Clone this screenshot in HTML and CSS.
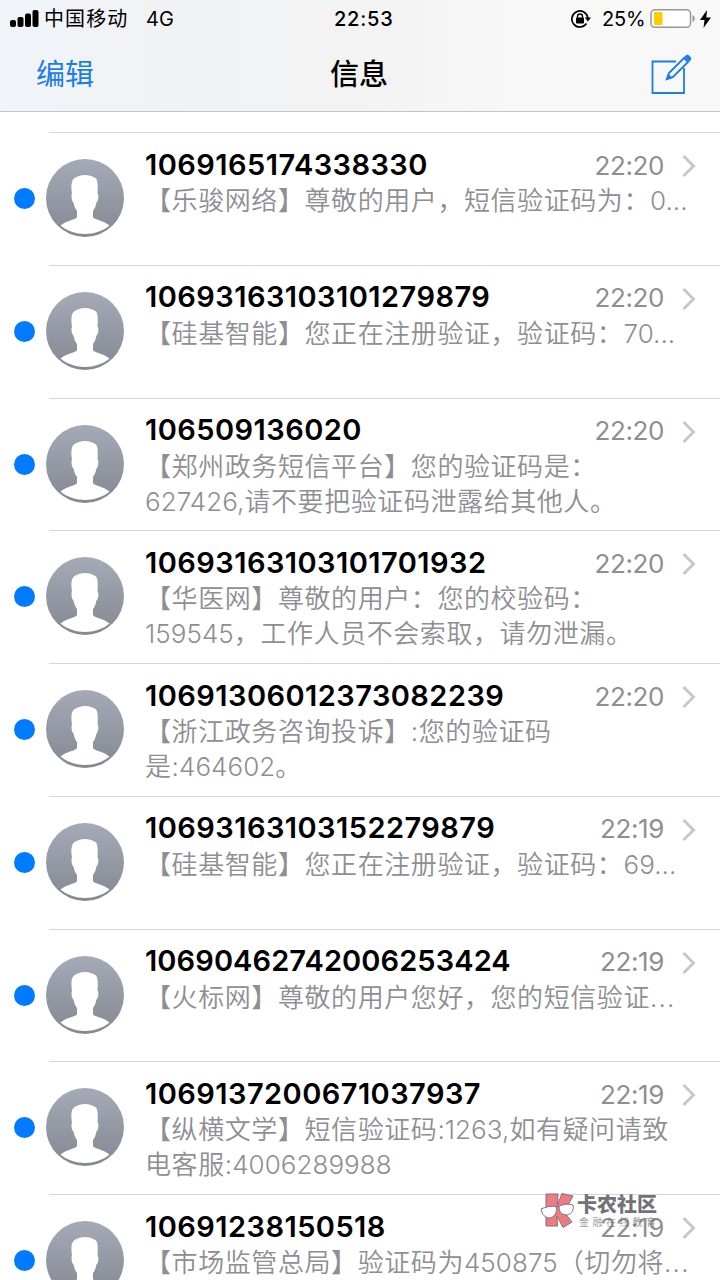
FILE: index.html
```html
<!DOCTYPE html>
<html lang="zh-CN">
<head>
    <meta charset="UTF-8">
    <meta name="viewport" content="width=device-width, initial-scale=1.0">
    <title>信息</title>
    <link rel="stylesheet" href="styles.css">
</head>
<body>
<svg class="defs" width="0" height="0">
    <defs>
        <linearGradient id="gray" x1="0" y1="0" x2="0" y2="1">
            <stop offset="0" stop-color="#a5aab7"/>
            <stop offset="1" stop-color="#858892"/>
        </linearGradient>
        <symbol id="person" viewBox="0 0 78 78">
            <circle cx="39" cy="39" r="39" fill="url(#gray)"/>
            <path fill="#fff" d="M39 16C43 16 47 17.500 50 19.500C52 22 52 28 51.500 34.500C53 36 52.500 42 50.500 43.500C50 45 49.500 49 47 52V58C48 61 57 61 63.500 66.500C57 72 48 75 39 75S21 72 14.500 66.500C21 61 30 61 31 58V52C28.500 49 28 45 27.500 43.500C25.500 42 25 36 26 34.500C25 28 25 22 28 19.500C31 17.500 35 16 39 16Z"/>
        </symbol>
        <symbol id="arrow" viewBox="0 0 14 24">
            <path d="M1.500 2L11.500 12L1.500 22" fill="none" stroke="#c7c7cc" stroke-width="3"/>
        </symbol>
    </defs>
</svg>
<header>
    <div class="status">
        <svg class="signal" width="29" height="18" viewBox="0 0 29 18">
            <rect x="0" y="10" width="6" height="7" rx="2"/>
            <rect x="7.500" y="7" width="6" height="10" rx="2"/>
            <rect x="15" y="3.500" width="6" height="13.500" rx="2"/>
            <rect x="22.500" y="0" width="6" height="17" rx="2"/>
        </svg>
        <span class="carrier">中国移动</span>
        <span class="network">4G</span>
        <span class="clock">22:53</span>
        <svg class="lock" width="20" height="18" viewBox="0 0 20 18">
            <path d="M15.500 13.500A8 8 0 1 1 16.800 8" fill="none" stroke="#000" stroke-width="1.700"/>
            <path d="M13.800 7.500H20L16.900 11.500Z"/>
            <rect x="5" y="7.500" width="8" height="6" rx="1"/>
            <path d="M6.500 8V6.500A2.500 2.500 0 0 1 11.500 6.500V8" fill="none" stroke="#000" stroke-width="1.400"/>
        </svg>
        <span class="percent">25%</span>
        <svg class="battery" width="46" height="20" viewBox="0 0 46 20">
            <rect x="1" y="0.800" width="39.500" height="17.500" rx="4" fill="#fff" stroke="#97979a" stroke-width="1.500"/>
            <rect x="4" y="3" width="8.500" height="13" rx="1" fill="#fc0"/>
            <path d="M42.500 6C45.500 7.500 45.500 11.500 42.500 13Z" fill="#97979a"/>
        </svg>
        <svg class="bolt" width="11" height="18" viewBox="0 0 11 18">
            <path d="M7 0L0 10H4.500L3.500 18L11 7.500H6.300Z"/>
        </svg>
    </div>
    <nav>
        <a href="#" class="edit">编辑</a>
        <h1>信息</h1>
        <a href="#" class="compose">
            <svg width="42" height="42" viewBox="0 0 42 42" fill="none" stroke="#1a7de8" stroke-width="1.800">
                <path d="M26 8.500H2.500V40H34V15"/>
                <path d="M16.800 26.200L19 20L34 5L38 9L23 24Z" stroke-width="1.900"/>
                <path d="M16 27L18 20.500L22.500 25Z" fill="#1a7de8" stroke="none"/>
                <path d="M34.500 4L36 2.500C38 1 42 4.500 40.300 7L39 8.500Z" fill="#1a7de8" stroke-width="1"/>
            </svg>
        </a>
    </nav>
</header>
<ul class="messages">
    <li>
        <span class="dot"></span>
        <svg class="avatar"><use href="#person"/></svg>
        <div class="content">
            <div class="top"><h2>1069165174338330</h2><time>22:20</time><svg class="arrow"><use href="#arrow"/></svg></div>
            <p>【乐骏网络】尊敬的用户，短信验证码为：<span class="num">0...</span></p>
        </div>
    </li>
    <li>
        <span class="dot"></span>
        <svg class="avatar"><use href="#person"/></svg>
        <div class="content">
            <div class="top"><h2>10693163103101279879</h2><time>22:20</time><svg class="arrow"><use href="#arrow"/></svg></div>
            <p>【硅基智能】您正在注册验证，验证码：<span class="num">70...</span></p>
        </div>
    </li>
    <li>
        <span class="dot"></span>
        <svg class="avatar"><use href="#person"/></svg>
        <div class="content">
            <div class="top"><h2>106509136020</h2><time>22:20</time><svg class="arrow"><use href="#arrow"/></svg></div>
            <p>【郑州政务短信平台】您的验证码是：<br><span class="num">627426,</span>请不要把验证码泄露给其他人。</p>
        </div>
    </li>
    <li>
        <span class="dot"></span>
        <svg class="avatar"><use href="#person"/></svg>
        <div class="content">
            <div class="top"><h2>10693163103101701932</h2><time>22:20</time><svg class="arrow"><use href="#arrow"/></svg></div>
            <p>【华医网】尊敬的用户：您的校验码：<br><span class="num">159545</span>，工作人员不会索取，请勿泄漏。</p>
        </div>
    </li>
    <li>
        <span class="dot"></span>
        <svg class="avatar"><use href="#person"/></svg>
        <div class="content">
            <div class="top"><h2>10691306012373082239</h2><time>22:20</time><svg class="arrow"><use href="#arrow"/></svg></div>
            <p>【浙江政务咨询投诉】:您的验证码<br>是<span class="num">:464602</span>。</p>
        </div>
    </li>
    <li>
        <span class="dot"></span>
        <svg class="avatar"><use href="#person"/></svg>
        <div class="content">
            <div class="top"><h2>10693163103152279879</h2><time>22:19</time><svg class="arrow"><use href="#arrow"/></svg></div>
            <p>【硅基智能】您正在注册验证，验证码：<span class="num">69...</span></p>
        </div>
    </li>
    <li>
        <span class="dot"></span>
        <svg class="avatar"><use href="#person"/></svg>
        <div class="content">
            <div class="top"><h2 class="tight">10690462742006253424</h2><time>22:19</time><svg class="arrow"><use href="#arrow"/></svg></div>
            <p>【火标网】尊敬的用户您好，您的短信验证<span class="dots">...</span></p>
        </div>
    </li>
    <li>
        <span class="dot"></span>
        <svg class="avatar"><use href="#person"/></svg>
        <div class="content">
            <div class="top"><h2>1069137200671037937</h2><time>22:19</time><svg class="arrow"><use href="#arrow"/></svg></div>
            <p>【纵横文学】短信验证码<span class="num">:1263,</span>如有疑问请致<br>电客服<span class="num">:4006289988</span></p>
        </div>
    </li>
    <li>
        <span class="dot"></span>
        <svg class="avatar"><use href="#person"/></svg>
        <div class="content">
            <div class="top"><h2>10691238150518</h2><time>22:19</time><svg class="arrow"><use href="#arrow"/></svg></div>
            <p>【市场监管总局】验证码为<span class="num">450875</span>（切勿将<span class="dots">...</span></p>
        </div>
    </li>
</ul>
<div class="watermark">
    <svg width="34" height="37" viewBox="0 0 34 37">
        <path d="M6 2H18L17.500 13L22 1.500L33 4L24 20L32 30L23 35.500L17 24L17.500 34H6Z" fill="#ee7b84" stroke="#77777a" stroke-width="1"/>
        <path d="M1 17C5 15 12 13.500 16 14.500C18 20 14 26 9 26C3 25 2 21 1 17ZM19 14.500C23 12 29 11.500 33 13C34 18 32 22 27 23C21 23 19 19 19 14.500Z" fill="#fff"/>
        <path d="M1 17C5 15 12 13.500 16 14.500L19 14.500C23 12 29 11.500 33 13C34 18 32 22 27 23C21 23 19 19 19 14.500M16 14.500C18 20 14 26 9 26C3 25 2 21 1 17" fill="none" stroke="#77777a" stroke-width="1"/>
    </svg>
    <div class="mark-text">
        <b>卡农社区</b>
        <small>金融在线教育</small>
    </div>
</div>
</body>
</html>
```

FILE: styles.css
```css
* {
    box-sizing: border-box;
}
body {
    margin: 0;
    height: 1280px;
    overflow: hidden;
    position: relative;
    background: #fff;
    font-family: Inter, "Noto Sans CJK SC", sans-serif;
}
.defs {
    position: absolute;
}
header {
    height: 112px;
    background: linear-gradient(90deg, #f0f4f9 0, #f1f2f3 170px, #f3f3f4 380px, #f8f8f9 520px);
    border-bottom: 1px solid #c4c4c7;
}
.status {
    height: 37px;
    padding-left: 10px;
    display: flex;
    align-items: center;
    font-size: 20px;
    line-height: 36px;
    white-space: nowrap;
}
.carrier {
    width: 84px;
    margin-left: 5px;
    padding-top: 1px;
    letter-spacing: 1.1px;
}
.network {
    width: 188px;
    margin-left: 18px;
    padding-top: 1px;
}
.clock {
    width: 237px;
    padding-top: 1px;
    font-weight: 550;
    letter-spacing: 0.8px;
}
.percent {
    width: 48px;
    margin-left: 11px;
    padding-top: 1px;
    letter-spacing: -0.2px;
}
.status svg {
    flex: none;
}
.bolt {
    margin-left: 4px;
}
nav {
    height: 70px;
    padding: 0 28px 0 36px;
    display: grid;
    grid-template-columns: 294px auto 1fr;
    align-items: center;
}
nav a {
    color: #1a7de8;
    text-decoration: none;
    font-size: 29px;
}
h1 {
    margin: 0;
    font-size: 29px;
    font-weight: 500;
}
.compose {
    justify-self: end;
    height: 42px;
    margin-top: 3px;
}
.compose svg {
    display: block;
}
.messages {
    list-style: none;
    margin: 20px 0 0;
    padding: 0;
}
.messages li {
    height: 132.75px;
    padding-left: 14px;
    display: flex;
    background: linear-gradient(#d6d6d9, #d6d6d9) no-repeat 49px 0 / 100% 1px;
}
.dot {
    width: 21px;
    height: 21px;
    margin-top: 56px;
    border-radius: 50%;
    background: #007aff;
}
.avatar {
    width: 78px;
    height: 78px;
    margin: 27px 21.5px 0 10.5px;
}
.content {
    width: 575px;
    padding-top: 15px;
}
.top {
    height: 36px;
    display: flex;
    align-items: center;
}
h2 {
    margin: 0 0 2px;
    flex: 1;
    font-size: 29px;
    font-weight: 600;
    line-height: 37px;
    letter-spacing: 0.45px;
}
.tight {
    letter-spacing: 0.1px;
}
time {
    color: #8e8e93;
    font-size: 26px;
    line-height: 37px;
    letter-spacing: -0.4px;
}
.arrow {
    width: 14px;
    height: 24px;
    margin: 2px 24px 0 18px;
}
p {
    margin: 0;
    color: #8e8e93;
    font-size: 26px;
    font-weight: 350;
    line-height: 35px;
    letter-spacing: 0.58px;
    white-space: nowrap;
}
.num {
    letter-spacing: 0.05px;
}
.dots {
    letter-spacing: 1.2px;
}
.watermark {
    position: absolute;
    left: 540px;
    top: 1192px;
    display: flex;
    color: #737377;
}
.mark-text {
    margin-left: 3px;
    padding-top: 1px;
}
.mark-text b {
    display: block;
    font-size: 20px;
    font-weight: 900;
    line-height: 24px;
}
.mark-text small {
    display: block;
    margin-left: 2px;
    font-size: 10px;
    line-height: 10px;
    letter-spacing: 3.4px;
    opacity: 0.7;
}
```
